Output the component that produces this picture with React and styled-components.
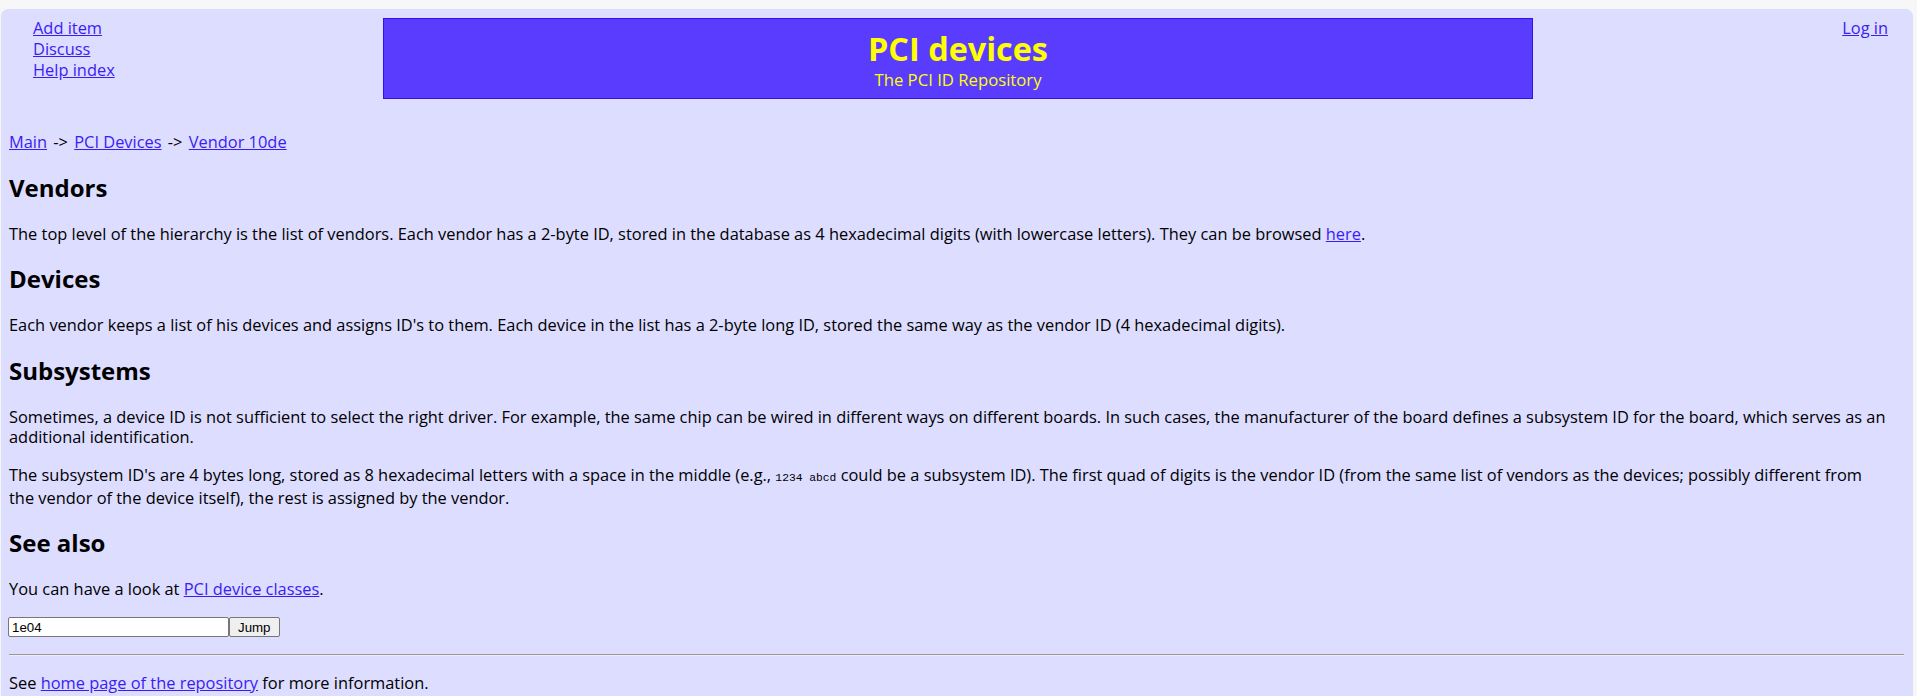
import React from "react";
import styled, { createGlobalStyle } from "styled-components";

const GlobalStyle = createGlobalStyle`
  html, body { margin: 0; padding: 0; }
  body {
    background: #f7f7f7;
    font-family: "Open Sans", "Noto Sans", sans-serif;
    font-size: 16.4px;
    color: #000;
  }
`;

const Panel = styled.div`
  margin: 9px 4px 0 1px;
  padding: 8px 9px 20px 8px;
  background: #ddddff;
  border-radius: 8px;
  box-shadow: 0 0 1px rgba(0, 0, 0, 0.08);
`;

const Header = styled.header`
  display: grid;
  grid-template-columns: 374px 1150px 1fr;
  align-items: start;
`;

const NavList = styled.ul`
  list-style: none;
  margin: 0;
  padding: 0 0 0 24px;
  line-height: 21px;
`;

const Link = styled.a`
  color: #3a1cf5;
  text-decoration: underline;
  cursor: pointer;
`;

const Banner = styled.div`
  margin-top: 1px;
  height: 79px;
  background: #5a3cff;
  border: 1px solid #3311ee;
  display: flex;
  flex-direction: column;
  align-items: center;
  justify-content: flex-start;
`;

const Title = styled.h1`
  margin: 9px 0 0;
  font-size: 32.4px;
  line-height: 40px;
  font-weight: 700;
  color: #ffff00;
`;

const Subtitle = styled.div`
  margin-top: 2px;
  font-size: 16.7px;
  line-height: 20px;
  color: #ffff00;
`;

const RightNav = styled.div`
  text-align: right;
  padding-right: 16px;
  line-height: 21px;
`;

const Crumbs = styled.p`
  margin: 33px 0 0;
  line-height: 20px;
`;

const Sep = styled.span`
  padding: 0 2px;
`;

const H2 = styled.h2`
  margin: 19.5px 0 20px;
  font-size: 24px;
  line-height: 32px;
  font-weight: 700;
`;

const P = styled.p`
  margin: 18px 15px 18px 0;
  line-height: 20px;
`;

const Code = styled.code`
  font-family: "Liberation Mono", monospace;
  font-size: 11.3px;
`;

const JumpForm = styled.form`
  display: flex;
  margin: 16px 0 0 -1px;
`;

const Input = styled.input`
  box-sizing: border-box;
  width: 221px;
  height: 20px;
  padding: 0 3px;
  border: 1px solid #767676;
  border-radius: 2px;
  background: #fff;
  font-family: "Liberation Sans", Arial, sans-serif;
  font-size: 13.3px;
`;

const Button = styled.button`
  box-sizing: border-box;
  height: 20px;
  padding: 0 8px;
  border: 1px solid #767676;
  border-radius: 2px;
  background: #efefef;
  font-family: "Liberation Sans", Arial, sans-serif;
  font-size: 13.3px;
`;

const Rule = styled.hr`
  margin: 17px 0 0;
  border: 0;
  border-top: 1px solid #999;
  border-bottom: 1px solid #eee;
`;

const Footer = styled.p`
  margin: 17px 0 0;
  line-height: 20px;
`;

export default function App() {
  return (
    <>
      <GlobalStyle />
      <Panel>
        <Header>
          <NavList>
            <li><Link>Add item</Link></li>
            <li><Link>Discuss</Link></li>
            <li><Link>Help index</Link></li>
          </NavList>
          <Banner>
            <Title>PCI devices</Title>
            <Subtitle>The PCI ID Repository</Subtitle>
          </Banner>
          <RightNav><Link>Log in</Link></RightNav>
        </Header>

        <Crumbs>
          <Link>Main</Link> <Sep>-&gt;</Sep> <Link>PCI Devices</Link> <Sep>-&gt;</Sep> <Link>Vendor 10de</Link>
        </Crumbs>

        <H2>Vendors</H2>
        <P>
          The top level of the hierarchy is the list of vendors. Each vendor has a 2-byte ID, stored in the database as 4 hexadecimal digits (with lowercase letters). They can be browsed <Link>here</Link>.
        </P>

        <H2>Devices</H2>
        <P>
          Each vendor keeps a list of his devices and assigns ID's to them. Each device in the list has a 2-byte long ID, stored the same way as the vendor ID (4 hexadecimal digits).
        </P>

        <H2>Subsystems</H2>
        <P>
          Sometimes, a device ID is not sufficient to select the right driver. For example, the same chip can be wired in different ways on different boards. In such cases, the manufacturer of the board defines a subsystem ID for the board, which serves as an additional identification.
        </P>
        <P>
          The subsystem ID's are 4 bytes long, stored as 8 hexadecimal letters with a space in the middle (e.g., <Code>1234 abcd</Code> could be a subsystem ID). The first quad of digits is the vendor ID (from the same list of vendors as the devices; possibly different from the vendor of the device itself), the rest is assigned by the vendor.
        </P>

        <H2>See also</H2>
        <P>
          You can have a look at <Link>PCI device classes</Link>.
        </P>

        <JumpForm onSubmit={(e) => e.preventDefault()}>
          <Input defaultValue="1e04" />
          <Button type="submit">Jump</Button>
        </JumpForm>

        <Rule />

        <Footer>
          See <Link>home page of the repository</Link> for more information.
        </Footer>
      </Panel>
    </>
  );
}
